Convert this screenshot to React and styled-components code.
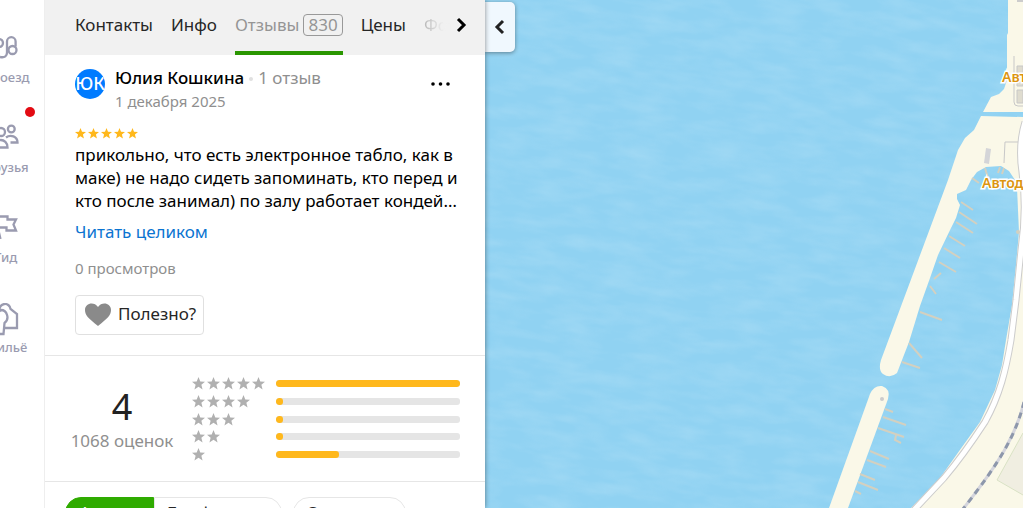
import React from "react";
import styled, { createGlobalStyle } from "styled-components";

const GlobalStyle = createGlobalStyle`
  * {
    box-sizing: border-box;
  }
  body {
    margin: 0;
    font-family: "Noto Sans", "Open Sans", sans-serif;
    color: #000;
    background: #fff;
  }
  button {
    font-family: inherit;
    cursor: pointer;
  }
`;

const Page = styled.div`
  display: flex;
  height: 100vh;
  overflow: hidden;
`;

/* sidebar */
const Sidebar = styled.nav`
  position: relative;
  z-index: 2;
  flex: none;
  width: 45px;
  display: flex;
  flex-direction: column;
  align-items: flex-end;
  gap: 36px;
  padding: 33px 0;
  overflow: hidden;
  background: #fff;
  border-right: 1px solid #eee;
`;
const SideLink = styled.a`
  position: relative;
  flex: none;
  width: 76px;
  height: 54px;
  display: flex;
  flex-direction: column;
  align-items: center;
  justify-content: space-between;
  color: #9a9bb0;
  font-size: 13px;
  font-weight: 500;
  line-height: 20px;
  text-decoration: none;
`;
const Dot = styled.span`
  position: absolute;
  top: -16px;
  right: 9px;
  width: 10px;
  height: 10px;
  border-radius: 50%;
  background: #e30b13;
`;

/* panel */
const Panel = styled.main`
  position: relative;
  z-index: 1;
  flex: none;
  width: 440px;
  overflow: hidden;
  background: #fff;
  box-shadow: 0 0 5px rgba(0, 0, 0, 0.45);
`;
const Tabs = styled.nav`
  display: flex;
  height: 55px;
  padding: 0 16px 0 30px;
  gap: 18px;
  background: #f1f1f1;
`;
const Tab = styled.a`
  display: flex;
  align-items: center;
  gap: 4px;
  padding-bottom: 2px;
  border-bottom: 4px solid ${(p) => (p.$active ? "#2a9600" : "transparent")};
  color: ${(p) => (p.$active ? "#959595" : "#262626")};
  font-size: 17px;
  text-decoration: none;
`;
const Count = styled.span`
  padding: 0 4px;
  border: 1px solid #999;
  border-radius: 4px;
  line-height: 20px;
`;
const Fading = styled(Tab)`
  flex: 1;
  min-width: 0;
  margin-right: -16px;
  overflow: hidden;
  background: linear-gradient(90deg, #b8b8b8, #f1f1f1 20px);
  background-clip: text;
  color: transparent;
`;
const IconButton = styled.button`
  display: flex;
  align-items: center;
  justify-content: center;
  padding: 0;
  border: 0;
  background: none;
`;
const NextButton = styled(IconButton)`
  padding-bottom: 6px;
`;

const Review = styled.article`
  padding: 11px 30px 20px;
  border-bottom: 1px solid #e6e6e6;
`;
const Head = styled.header`
  display: flex;
  align-items: flex-start;
  gap: 10px;
`;
const Avatar = styled.div`
  width: 30px;
  height: 30px;
  display: flex;
  align-items: center;
  justify-content: center;
  margin-top: 3px;
  padding-bottom: 2px;
  overflow: hidden;
  border-radius: 50%;
  background: #007bff;
  color: #fff;
  font-size: 18px;
  font-weight: 500;
  line-height: 24px;
`;
const Author = styled.div`
  flex: 1;
  line-height: 24px;
  font-size: 17px;
  color: #8f8f8f;
`;
const Name = styled.span`
  color: #000;
  font-weight: 500;
`;
const Bullet = styled.span`
  display: inline-block;
  width: 4px;
  height: 4px;
  margin: 0 5px;
  border-radius: 50%;
  background: #e0e0e0;
  vertical-align: middle;
`;
const Posted = styled.div`
  font-size: 15px;
  line-height: 22px;
`;
const MenuButton = styled(IconButton)`
  margin-top: 6px;
`;
const Stars = styled.div`
  display: flex;
  gap: 2px;
`;
const ReviewStars = styled(Stars)`
  margin: 16px 0 4px;
`;
const Text = styled.p`
  margin: 0 -16px 0 0;
  font-size: 17px;
  line-height: 23px;
`;
const More = styled.a`
  display: block;
  margin-top: 8px;
  color: #0b74d1;
  font-size: 17px;
  line-height: 24px;
  text-decoration: none;
`;
const Views = styled.div`
  margin: 13px 0 16px;
  color: #8f8f8f;
  font-size: 15px;
  line-height: 22px;
`;
const Useful = styled.button`
  display: flex;
  align-items: center;
  gap: 7px;
  height: 40px;
  padding: 0 7px 4px 9px;
  border: 1px solid #e0e0e0;
  border-radius: 4px;
  background: #fff;
  color: #262626;
  font-size: 17px;

  svg {
    margin-top: 4px;
  }
`;

const Summary = styled.section`
  display: flex;
  align-items: center;
  gap: 13px;
  padding: 21px 25px 20px 20px;
  border-bottom: 1px solid #e6e6e6;
`;
const Total = styled.div`
  width: 114px;
  color: #8f8f8f;
  font-size: 17px;
  line-height: 24px;
  text-align: center;
`;
const Score = styled.div`
  color: #222;
  font-size: 36px;
  line-height: 44px;
`;
const Bars = styled.div`
  flex: 1;
  height: 84px;
  display: flex;
  flex-direction: column;
  justify-content: space-between;
`;
const BarRow = styled.div`
  display: grid;
  grid-template-columns: 73px 1fr;
  align-items: center;
  gap: 11px;
`;
const Track = styled.div`
  height: 7px;
  border-radius: 3px;
  background: #e5e5e5;
  overflow: hidden;
`;
const Fill = styled.div`
  height: 100%;
  border-radius: 3px;
  background: #ffb81c;
`;

const Filters = styled.div`
  display: flex;
  gap: 11px;
  padding: 15px 20px;
`;
const Group = styled.div`
  display: flex;
`;
const Chip = styled.button`
  min-width: ${(p) => p.$width || 113}px;
  height: 32px;
  padding: 0 12px;
  border: 1px solid ${(p) => (p.$active ? "#2fab00" : "#e6e6e6")};
  border-radius: ${(p) => p.$radius || "18px"};
  background: ${(p) => (p.$active ? "#2fab00" : "#fff")};
  color: ${(p) => (p.$active ? "#fff" : "#262626")};
  font-size: 17px;
  line-height: 24px;
  text-align: ${(p) => (p.$active ? "center" : "left")};
`;

/* map */
const MapArea = styled.section`
  position: relative;
  flex: 1;
  min-width: 0;
  overflow: hidden;
  background: #92d2f2;
`;
const MapSvg = styled.svg`
  display: block;
  width: 100%;
  height: 100%;
`;
const Collapse = styled(IconButton)`
  position: absolute;
  top: 2px;
  left: 0;
  width: 30px;
  height: 50px;
  border-radius: 0 5px 5px 0;
  background: #f0f8fe;
  box-shadow: 0 1px 4px rgba(0, 0, 0, 0.4);
`;

const Star = ({ size, color }) => (
  <svg width={size} height={size} viewBox="0 0 24 24" fill={color}>
    <path d="M12 0l3.300 8.200 8.700.6-6.700 5.600 2.200 8.600L12 18.200 4.500 23l2.200-8.600L0 8.800l8.700-.6z" />
  </svg>
);

const stroke = {
  fill: "none",
  stroke: "currentColor",
  strokeWidth: 2.3,
};

const RouteIcon = () => (
  <svg width="28" height="28" viewBox="0 0 28 28" {...stroke}>
    <circle cx="7" cy="10" r="4" />
    <path d="M8 24c5 1 7-1 7-4.500V8.500a4.300 4.300 0 0 1 8.600 0v5" />
    <circle cx="20.500" cy="17" r="4" />
  </svg>
);
const FriendsIcon = () => (
  <svg width="28" height="28" viewBox="0 0 28 28" {...stroke}>
    <circle cx="9" cy="9" r="4" />
    <circle cx="19.300" cy="6" r="3.400" />
    <path d="M2 24.500c0-10 13.500-10 13.500 0zM14 14.500c4.500-3.500 11.500-1 11.500 5h-7" />
  </svg>
);
const GuideIcon = () => (
  <svg width="28" height="28" viewBox="0 0 28 28" {...stroke}>
    <path d="M8.500 26L3 3.500h12.500v3H24l-2.500 5 2.500 6h-9.500v-3H6" />
  </svg>
);
const HousingIcon = () => (
  <svg width="32" height="34" viewBox="0 0 32 34" {...stroke}>
    <path d="M13.500 31H4V12l7-5c6 0 9 9 3.500 13zM9.500 7a5.500 5.500 0 0 1 11-1l6.500 5v14h-12" />
  </svg>
);

const sideItems = [
  { label: "Проезд", Icon: RouteIcon },
  { label: "Друзья", Icon: FriendsIcon, dot: true },
  { label: "Гид", Icon: GuideIcon },
  { label: "Жильё", Icon: HousingIcon },
];

const ratings = [
  { stars: 5, percent: 100 },
  { stars: 4, percent: 4 },
  { stars: 3, percent: 4 },
  { stars: 2, percent: 4 },
  { stars: 1, percent: 34 },
];

const road =
  "M1025 122Q1018 145 1022 172Q1027 210 1021 250L1016 300L1011 340C1006 370 1000 395 985 422C970 445 955 465 944 478L914 510";
const railway = "M1024 402C1016 435 1000 462 963 509";

const CityMap = () => (
  <MapSvg viewBox="485 0 538 508" preserveAspectRatio="xMaxYMin slice">
    <defs>
      <filter id="water" x="0" y="0" width="100%" height="100%">
        <feTurbulence type="fractalNoise" baseFrequency="0.03 0.1" numOctaves="3" seed="4" />
        <feColorMatrix values="0 0 0 0 1  0 0 0 0 1  0 0 0 0 1  0.9 0 0 0 -0.3" />
      </filter>
    </defs>
    <rect x="485" width="538" height="508" fill="#90d2f2" />
    <rect x="485" width="538" height="508" filter="url(#water)" opacity="0.25" transform="rotate(8 754 254) translate(754 254) scale(1.200) translate(-754 -254)" />
    <g fill="#faf8e8">
      <path d="M1008 0V33L1007 35V80L1004 89L999 94L991 97L983 112H1023V0Z" />
      <path d="M981 116L974 130L965 138L958 150L948 180L881 360Q878 370 883 374Q890 379 897 373L909 342L920 306L930 278L938 255L951 228L956 218L960 205L957 199V194L966 190L971 180L977 172L986 167L1001 166L1009 171L1015 180L1017 188L1019 232L1016 265L1012 305L1006 340L1002 365L995 390L980 422L962 447L940 478L911 508H1023V117Z" />
      <path d="M829 508L870 394Q874 385 882 386Q891 389 888 399L848 508Z" />
    </g>
    <path d="M1023 433L997 480L1023 495" fill="#f0eee1" stroke="#d9e2c5" />
    <g fill="none" stroke="#d3d0c0" strokeWidth="2">
      <path d="M972 178l7 5M985 168l3 10M1000 167l-2 6M1004 168l-2 6M961 202l12 8M959 212l18 12M956 222l17 11M949 236l16 10M944 248l16 10M939 262l17 10M934 279l7-6M930 286l6 8M920 312l22 8M909 343l13 15M902 362l18 6" />
      <path d="M885 409l8 3M883 417l23 8M878 428l26 9M896 435l-1 5 6 3M870 451l19 8M867 460l19 7M860 474l15 6M858 482l20 8M855 491l6 3" />
    </g>
    <g fill="none" stroke="#c8c8c8">
      <path d="M1014 56V102Q1014 106 1018 106H1023M1004 163L1005 142L1023 142" />
      <path d="M1017 66h6v20h-6zM1017 90h6v13h-6z" fill="#dfdccf" />
    </g>
    <path d="M1017 0h6v2h-6z" fill="#ccc" />
    <path d="M986 148l5 1-2 15-5-1z" fill="#d4d5d8" />
    <circle cx="882" cy="399" r="2" fill="#ccc" />
    <circle cx="1018" cy="232" r="2" fill="#d3d0c0" />
    <path d={road} fill="none" stroke="#ccc" strokeWidth="7" />
    <path d={road} fill="none" stroke="#fff" strokeWidth="5" />
    <path d={railway} fill="none" stroke="#d3d4dc" strokeWidth="3" />
    <path d={railway} fill="none" stroke="#8d97ab" strokeWidth="3" strokeDasharray="6 5" />
    <g fill="#dc950f" stroke="#fff" strokeWidth="3" paintOrder="stroke" fontSize="14" fontWeight="600">
      <text x="1002" y="82">Автодор</text>
      <text x="982" y="188">Автодор</text>
    </g>
  </MapSvg>
);

const App = () => {
  return (
    <Page>
      <GlobalStyle />
      <Sidebar>
        {sideItems.map(({ label, Icon, dot }) => (
          <SideLink href="#" key={label}>
            <Icon />
            {label}
            {dot && <Dot />}
          </SideLink>
        ))}
      </Sidebar>
      <Panel>
        <Tabs>
          <Tab href="#">Контакты</Tab>
          <Tab href="#">Инфо</Tab>
          <Tab href="#" $active>
            Отзывы <Count>830</Count>
          </Tab>
          <Tab href="#">Цены</Tab>
          <Fading href="#">Фото</Fading>
          <NextButton aria-label="Дальше">
            <svg width="16" height="16" viewBox="0 0 16 16" fill="none" stroke="#000" strokeWidth="3">
              <path d="M5 2l6 6-6 6" />
            </svg>
          </NextButton>
        </Tabs>
        <Review>
          <Head>
            <Avatar>ЮК</Avatar>
            <Author>
              <Name>Юлия Кошкина</Name>
              <Bullet />1 отзыв
              <Posted>1 декабря 2025</Posted>
            </Author>
            <MenuButton aria-label="Ещё">
              <svg width="30" height="24" viewBox="0 0 30 24">
                <circle cx="8" cy="12" r="1.800" />
                <circle cx="15.500" cy="12" r="1.800" />
                <circle cx="23" cy="12" r="1.800" />
              </svg>
            </MenuButton>
          </Head>
          <ReviewStars>
            {[1, 2, 3, 4, 5].map((i) => (
              <Star key={i} size={11} color="#ffb81c" />
            ))}
          </ReviewStars>
          <Text>
            прикольно, что есть электронное табло, как в
            <br />
            маке) не надо сидеть запоминать, кто перед и
            <br />
            кто после занимал) по залу работает кондей…
          </Text>
          <More href="#">Читать целиком</More>
          <Views>0 просмотров</Views>
          <Useful>
            <svg width="26" height="24" viewBox="0 0 26 24" fill="#8a8a8a">
              <path d="M13 23C3 15 0 12 0 7c0-7 9-9 13-3 4-6 13-4 13 3 0 5-3 8-13 16z" />
            </svg>
            Полезно?
          </Useful>
        </Review>
        <Summary>
          <Total>
            <Score>4</Score>
            1068 оценок
          </Total>
          <Bars>
            {ratings.map(({ stars, percent }) => (
              <BarRow key={stars}>
                <Stars>
                  {Array.from({ length: stars }, (_, i) => (
                    <Star key={i} size={13} color="#b0b0b0" />
                  ))}
                </Stars>
                <Track>
                  <Fill style={{ width: `${percent}%` }} />
                </Track>
              </BarRow>
            ))}
          </Bars>
        </Summary>
        <Filters>
          <Group>
            <Chip $active $width={89} $radius="18px 0 0 18px">
              Анкеты
            </Chip>
            <Chip $width={128} $radius="0 18px 18px 0">
              Без фото
            </Chip>
          </Group>
          <Chip>С ответом</Chip>
        </Filters>
      </Panel>
      <MapArea>
        <CityMap />
        <Collapse aria-label="Свернуть панель">
          <svg width="14" height="16" viewBox="0 0 14 16" fill="none" stroke="#222" strokeWidth="3">
            <path d="M10 2L4 8l6 6" />
          </svg>
        </Collapse>
      </MapArea>
    </Page>
  );
};

export default App;
